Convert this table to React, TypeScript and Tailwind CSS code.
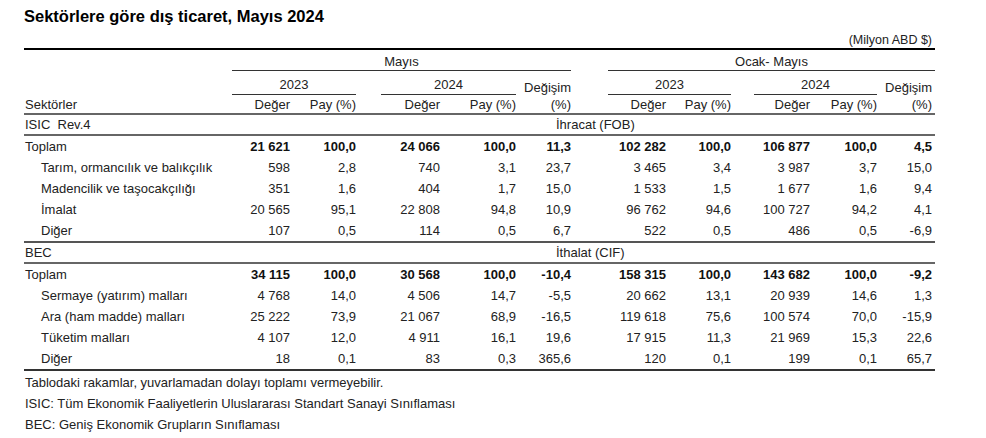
import React from "react";

type Row = {
  label: string;
  values: string[];
  bold?: boolean;
  indent?: boolean;
};

// label | c1 c2 _ c3 c4 c5 _ c6 c7 _ c8 c9 c10
const GRID =
  "grid grid-cols-[208px_58px_66px_25px_59px_76px_55px_37px_58px_65px_23px_56px_67px_58px]";

const ihracat: Row[] = [
  { label: "Toplam", values: ["21 621", "100,0", "24 066", "100,0", "11,3", "102 282", "100,0", "106 877", "100,0", "4,5"], bold: true },
  { label: "Tarım, ormancılık ve balıkçılık", values: ["598", "2,8", "740", "3,1", "23,7", "3 465", "3,4", "3 987", "3,7", "15,0"], indent: true },
  { label: "Madencilik ve taşocakçılığı", values: ["351", "1,6", "404", "1,7", "15,0", "1 533", "1,5", "1 677", "1,6", "9,4"], indent: true },
  { label: "İmalat", values: ["20 565", "95,1", "22 808", "94,8", "10,9", "96 762", "94,6", "100 727", "94,2", "4,1"], indent: true },
  { label: "Diğer", values: ["107", "0,5", "114", "0,5", "6,7", "522", "0,5", "486", "0,5", "-6,9"], indent: true },
];

const ithalat: Row[] = [
  { label: "Toplam", values: ["34 115", "100,0", "30 568", "100,0", "-10,4", "158 315", "100,0", "143 682", "100,0", "-9,2"], bold: true },
  { label: "Sermaye (yatırım) malları", values: ["4 768", "14,0", "4 506", "14,7", "-5,5", "20 662", "13,1", "20 939", "14,6", "1,3"], indent: true },
  { label: "Ara (ham madde) malları", values: ["25 222", "73,9", "21 067", "68,9", "-16,5", "119 618", "75,6", "100 574", "70,0", "-15,9"], indent: true },
  { label: "Tüketim malları", values: ["4 107", "12,0", "4 911", "16,1", "19,6", "17 915", "11,3", "21 969", "15,3", "22,6"], indent: true },
  { label: "Diğer", values: ["18", "0,1", "83", "0,3", "365,6", "120", "0,1", "199", "0,1", "65,7"], indent: true },
];

const DataRow = ({ row }: { row: Row }) => {
  const v = row.values;
  const num = `text-right leading-[21px] ${row.bold ? "font-bold text-[#111]" : ""}`;
  return (
    <div className={`${GRID} h-[21px]`}>
      <div className={`leading-[21px] ${row.indent ? "pl-[17px]" : "pl-[1px]"}`}>{row.label}</div>
      <div className={num}>{v[0]}</div>
      <div className={num}>{v[1]}</div>
      <div />
      <div className={num}>{v[2]}</div>
      <div className={num}>{v[3]}</div>
      <div className={num}>{v[4]}</div>
      <div />
      <div className={num}>{v[5]}</div>
      <div className={num}>{v[6]}</div>
      <div />
      <div className={num}>{v[7]}</div>
      <div className={num}>{v[8]}</div>
      <div className={`${num} pr-[3px]`}>{v[9]}</div>
    </div>
  );
};

const SectionRow = ({ left, mid }: { left: string; mid: string }) => (
  <div className={`${GRID} h-[21px] border-b-2 border-[#666]`}>
    <div className="pl-[1px] leading-[19px] whitespace-pre">{left}</div>
    <div className="col-start-7 col-span-4 leading-[19px] pl-[40px]">{mid}</div>
  </div>
);

export default function App() {
  return (
    <div
      className="w-[986px] h-[438px] bg-white text-[13px] text-[#222] pl-[24px]"
      style={{ fontFamily: '"Liberation Sans", Arial, sans-serif' }}
    >
      <div className="pt-[7px] text-[16.5px] leading-[18px] font-bold text-black">
        Sektörlere göre dış ticaret, Mayıs 2024
      </div>
      <div className="w-[911px] mt-[7px] text-right leading-[16px] pr-[3px] text-[12.5px]">(Milyon ABD $)</div>

      <div className="w-[911px] border-t-2 border-black">
        {/* Mayıs / Ocak-Mayıs */}
        <div className={`${GRID} h-[21px]`}>
          <div className="col-start-2 col-span-6 flex items-end justify-center border-b border-[#333] leading-[15px] pb-[1px]">
            Mayıs
          </div>
          <div className="col-start-9 col-span-6 flex items-end justify-center border-b border-[#333] leading-[15px] pb-[1px]">
            Ocak- Mayıs
          </div>
        </div>

        {/* years */}
        <div className={`${GRID} h-[22px]`}>
          <div className="col-start-2 col-span-2 flex items-end justify-center border-b border-[#333] leading-[15px] pb-[2px]">
            2023
          </div>
          <div className="col-start-5 col-span-2 flex items-end justify-center border-b border-[#333] leading-[15px] pb-[2px]">
            2024
          </div>
          <div className="col-start-7 text-right leading-[15px] pt-[9px]">Değişim</div>
          <div className="col-start-9 col-span-2 flex items-end justify-center border-b border-[#333] leading-[15px] pb-[2px]">
            2023
          </div>
          <div className="col-start-12 col-span-2 flex items-end justify-center border-b border-[#333] leading-[15px] pb-[2px]">
            2024
          </div>
          <div className="col-start-14 text-right leading-[15px] pt-[9px] pr-[3px]">Değişim</div>
        </div>

        {/* column names */}
        <div className={`${GRID} h-[22px] border-b-2 border-[#666] items-end`}>
          <div className="pl-[1px] leading-[15px] pb-[1px]">Sektörler</div>
          <div className="text-right leading-[15px] pb-[1px]">Değer</div>
          <div className="text-right leading-[15px] pb-[1px]">Pay (%)</div>
          <div />
          <div className="text-right leading-[15px] pb-[1px]">Değer</div>
          <div className="text-right leading-[15px] pb-[1px]">Pay (%)</div>
          <div className="text-right leading-[15px] pb-[1px]">(%)</div>
          <div />
          <div className="text-right leading-[15px] pb-[1px]">Değer</div>
          <div className="text-right leading-[15px] pb-[1px]">Pay (%)</div>
          <div />
          <div className="text-right leading-[15px] pb-[1px]">Değer</div>
          <div className="text-right leading-[15px] pb-[1px]">Pay (%)</div>
          <div className="text-right leading-[15px] pb-[1px] pr-[3px]">(%)</div>
        </div>

        <SectionRow left="ISIC  Rev.4" mid="İhracat (FOB)" />
        <div className="border-b-2 border-[#555]">
          {ihracat.map((r) => (
            <DataRow key={"x" + r.label} row={r} />
          ))}
        </div>

        <SectionRow left="BEC" mid="İthalat (CIF)" />
        <div className="border-b-2 border-[#333]">
          {ithalat.map((r) => (
            <DataRow key={"m" + r.label} row={r} />
          ))}
        </div>

        <div className="pl-[1px] text-[13px] leading-[21px] pt-[1px]">
          <div>Tablodaki rakamlar, yuvarlamadan dolayı toplamı vermeyebilir.</div>
          <div>ISIC: Tüm Ekonomik Faaliyetlerin Uluslararası Standart Sanayi Sınıflaması</div>
          <div>BEC: Geniş Ekonomik Grupların Sınıflaması</div>
        </div>
      </div>
    </div>
  );
}
